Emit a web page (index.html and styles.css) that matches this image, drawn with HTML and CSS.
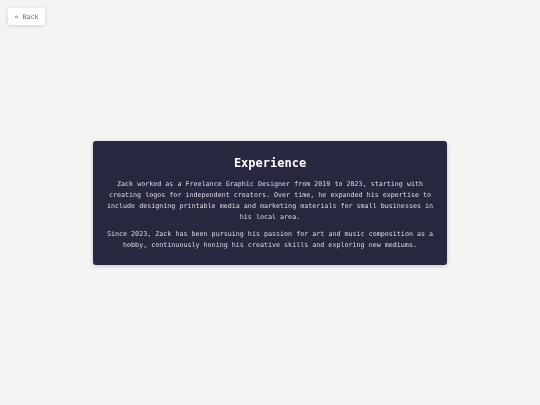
FILE: index.html
```html
<!DOCTYPE html>
<html lang="en">

<head>
    <meta charset="UTF-8">
    <meta name="viewport" content="width=device-width, initial-scale=1.0">
    <title>Experience</title>
    <link rel="stylesheet" href="styles.css">
</head>

<body>
    <button class="back-btn" onclick="history.back()">« Back</button>

    <div class="page">
        <div class="card">
            <h1 class="title">Experience</h1>
            <p>Zack worked as a Freelance Graphic Designer from 2019 to 2023, starting with creating logos for independent creators. Over time, he expanded his expertise to include designing printable media and marketing materials for small businesses in his local area.</p>
            <p>Since 2023, Zack has been pursuing his passion for art and music composition as a hobby, continuously honing his creative skills and exploring new mediums.</p>
        </div>
    </div>
</body>

</html>
```

FILE: styles.css
```css
* {
  margin: 0px;
  padding: 0px;
  box-sizing: border-box;
}

body {
  font-family: "DejaVu Sans Mono", "Liberation Mono", monospace;
  background-color: #f4f4f4;
  min-height: 100vh;
}

.back-btn {
  position: fixed;
  top: 8px;
  left: 8px;
  width: 37px;
  height: 17px;
  background-color: #fff;
  color: #6a6a6a;
  border: none;
  border-radius: 3px;
  font-family: "DejaVu Sans Mono", monospace;
  font-size: 6.7px;
  cursor: pointer;
  box-shadow: 0 1px 4px rgba(0, 0, 0, 0.15);
  will-change: transform;
}

.page {
  display: flex;
  justify-content: center;
  align-items: center;
  min-height: 100vh;
}

.card {
  width: 354px;
  background-color: #27273f;
  color: #dcdce4;
  border-radius: 3px;
  padding: 15px 10px 14px;
  text-align: center;
  box-shadow: 0 1px 4px rgba(0, 0, 0, 0.2);
  will-change: transform;
}

.title {
  font-size: 12px;
  font-weight: bold;
  color: #fff;
  margin-bottom: 9px;
}

.card p {
  font-size: 6.7px;
  line-height: 11px;
  margin-bottom: 6px;
}

.card p:last-child {
  margin-bottom: 0;
}
```
